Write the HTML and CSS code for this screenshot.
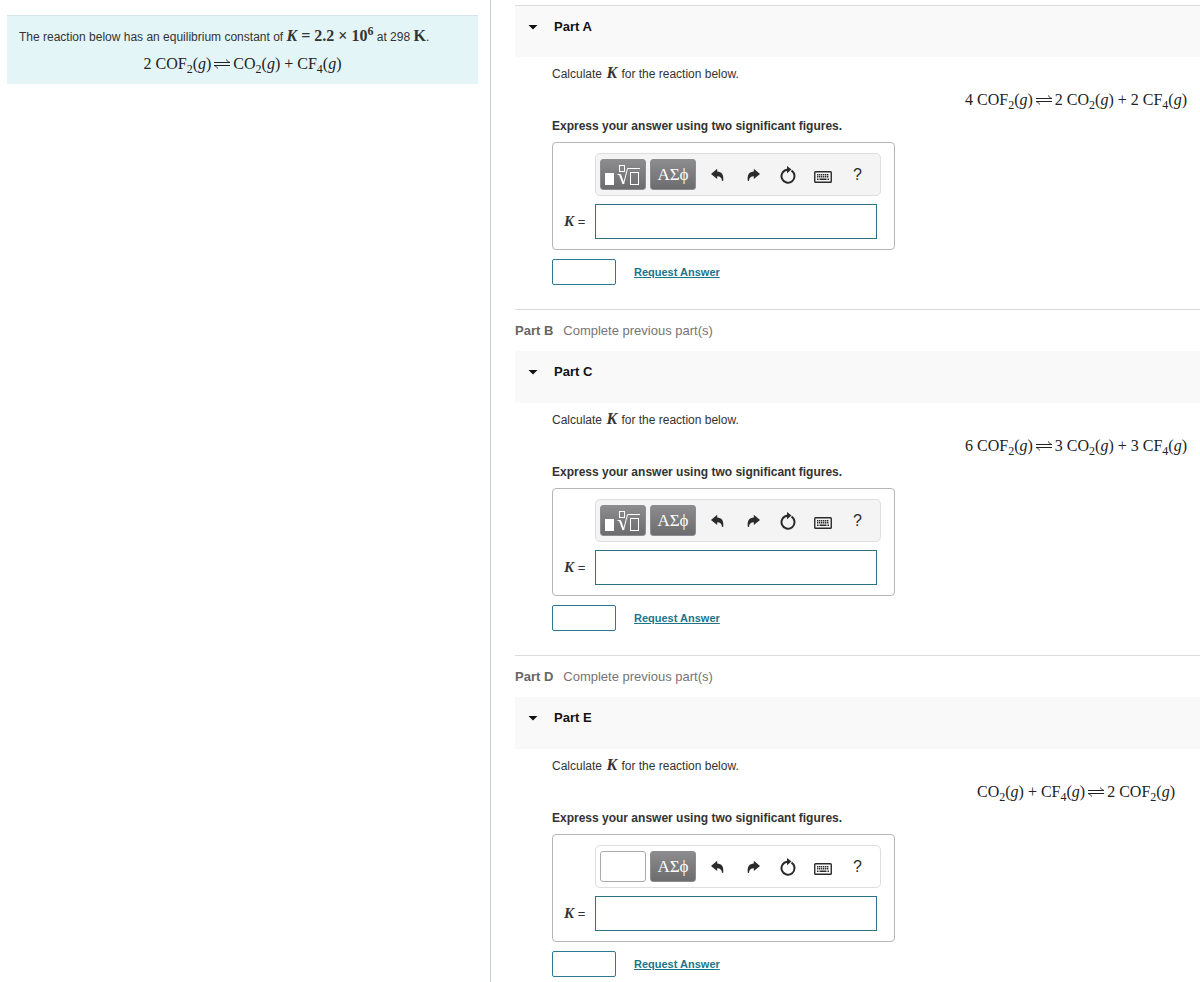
FILE: index.html
```html
<!DOCTYPE html>
<html lang="en">
<head>
<meta charset="utf-8">
<meta name="viewport" content="width=device-width, initial-scale=1">
<title>Equilibrium constant</title>
<link rel="stylesheet" href="styles.css">
</head>
<body>
<svg class="defs" aria-hidden="true">
  <symbol id="equil" viewBox="0 0 16 10"><path d="M0 3.500H16M16 3.500C14 3 13 2 12.500 .5M0 6.500H16M0 6.500C2 7 3 8 3.500 9.500" fill="none" stroke="currentColor" stroke-width="1"/></symbol>
  <symbol id="undo" viewBox="0 0 14 14"><path d="M0 6L6.200 .8V3.600C10.500 3.800 13 6.600 12.200 12.800L11 13C10.800 9.800 9.300 8.300 6.200 8.300V11Z" fill="currentColor"/></symbol>
  <symbol id="redo" viewBox="0 0 14 14"><path d="M14 6L7.800 .8V3.600C3.500 3.800 1 6.600 1.800 12.800L3 13C3.200 9.800 4.700 8.300 7.800 8.300V11Z" fill="currentColor"/></symbol>
  <symbol id="reset" viewBox="0 0 16 18"><path d="M11.500 4.700A6.500 6.500 0 1 1 7.500 3.700" fill="none" stroke="currentColor" stroke-width="2"/><path d="M7 0L11.500 3.500L7 7.200Z" fill="currentColor"/></symbol>
  <symbol id="keys" viewBox="0 0 18 12"><rect x=".75" y=".75" width="16.500" height="10.500" rx=".8" fill="none" stroke="currentColor" stroke-width="1.400"/><path d="M3 3.800H15M3 5.800H15" stroke="currentColor" stroke-width="1.500" stroke-dasharray="1.400 .6"/><path d="M3 8.200H4.500M5.500 8.200H12.500M13.500 8.200H15" stroke="currentColor" stroke-width="1.400"/></symbol>
  <symbol id="root" viewBox="0 0 36 22"><rect x="0" y="9" width="9" height="12" fill="#fff"/><g fill="none" stroke="#fff" stroke-width="1"><rect x="14.500" y="1.500" width="5" height="6"/><path d="M12.500 10.500H15L18.500 20L22.500 4.500H35"/><rect x="25.500" y="8.500" width="8" height="12"/></g><path d="M15 10.500L18.500 20" stroke="#fff" stroke-width="2"/></symbol>
</svg>
<div class="page">
  <aside class="side">
    <div class="intro">
      <p class="line">The reaction below has an equilibrium constant of <span class="math strong"><i>K</i> = 2.2 × 10<sup>6</sup></span> at 298 <span class="math strong">K</span>.</p>
      <p class="math formula">2 COF<sub>2</sub>(<i>g</i>)<svg class="equil" role="img" aria-label="is in equilibrium with"><use href="#equil"/></svg>CO<sub>2</sub>(<i>g</i>) + CF<sub>4</sub>(<i>g</i>)</p>
    </div>
  </aside>
  <main class="parts">
    <section class="part">
      <h2 class="head"><button class="toggle" type="button" aria-expanded="true"><span class="caret"></span>Part A</button></h2>
      <div class="body">
        <p class="line">Calculate <i class="math var">K</i> for the reaction below.</p>
        <p class="math formula aside">4 COF<sub>2</sub>(<i>g</i>)<svg class="equil" role="img" aria-label="is in equilibrium with"><use href="#equil"/></svg>2 CO<sub>2</sub>(<i>g</i>) + 2 CF<sub>4</sub>(<i>g</i>)</p>
        <p class="line hint">Express your answer using two significant figures.</p>
        <div class="answer">
          <div class="toolbar">
            <button class="pad" type="button" aria-label="Templates"><svg class="root"><use href="#root"/></svg></button>
            <button class="pad" type="button">ΑΣϕ</button>
            <div class="tools">
              <button class="tool" type="button" aria-label="Undo"><svg class="arrow"><use href="#undo"/></svg></button>
              <button class="tool" type="button" aria-label="Redo"><svg class="arrow"><use href="#redo"/></svg></button>
              <button class="tool" type="button" aria-label="Reset"><svg class="reset"><use href="#reset"/></svg></button>
              <button class="tool" type="button" aria-label="Keyboard shortcuts"><svg class="keys"><use href="#keys"/></svg></button>
              <button class="tool" type="button">?</button>
            </div>
          </div>
          <label class="label" for="answer-a"><i class="math">K</i> =</label>
          <input class="field" id="answer-a" type="text">
        </div>
        <div class="actions"><button class="submit" type="button" aria-label="Submit"></button><a class="request" href="#">Request Answer</a></div>
      </div>
    </section>
    <p class="locked"><b>Part B</b>Complete previous part(s)</p>
    <section class="part">
      <h2 class="head"><button class="toggle" type="button" aria-expanded="true"><span class="caret"></span>Part C</button></h2>
      <div class="body">
        <p class="line">Calculate <i class="math var">K</i> for the reaction below.</p>
        <p class="math formula aside">6 COF<sub>2</sub>(<i>g</i>)<svg class="equil" role="img" aria-label="is in equilibrium with"><use href="#equil"/></svg>3 CO<sub>2</sub>(<i>g</i>) + 3 CF<sub>4</sub>(<i>g</i>)</p>
        <p class="line hint">Express your answer using two significant figures.</p>
        <div class="answer">
          <div class="toolbar">
            <button class="pad" type="button" aria-label="Templates"><svg class="root"><use href="#root"/></svg></button>
            <button class="pad" type="button">ΑΣϕ</button>
            <div class="tools">
              <button class="tool" type="button" aria-label="Undo"><svg class="arrow"><use href="#undo"/></svg></button>
              <button class="tool" type="button" aria-label="Redo"><svg class="arrow"><use href="#redo"/></svg></button>
              <button class="tool" type="button" aria-label="Reset"><svg class="reset"><use href="#reset"/></svg></button>
              <button class="tool" type="button" aria-label="Keyboard shortcuts"><svg class="keys"><use href="#keys"/></svg></button>
              <button class="tool" type="button">?</button>
            </div>
          </div>
          <label class="label" for="answer-c"><i class="math">K</i> =</label>
          <input class="field" id="answer-c" type="text">
        </div>
        <div class="actions"><button class="submit" type="button" aria-label="Submit"></button><a class="request" href="#">Request Answer</a></div>
      </div>
    </section>
    <p class="locked"><b>Part D</b>Complete previous part(s)</p>
    <section class="part">
      <h2 class="head"><button class="toggle" type="button" aria-expanded="true"><span class="caret"></span>Part E</button></h2>
      <div class="body">
        <p class="line">Calculate <i class="math var">K</i> for the reaction below.</p>
        <p class="math formula aside">CO<sub>2</sub>(<i>g</i>) + CF<sub>4</sub>(<i>g</i>)<svg class="equil" role="img" aria-label="is in equilibrium with"><use href="#equil"/></svg>2 COF<sub>2</sub>(<i>g</i>)</p>
        <p class="line hint">Express your answer using two significant figures.</p>
        <div class="answer">
          <div class="toolbar plain">
            <button class="pad blank" type="button" aria-label="Templates"></button>
            <button class="pad" type="button">ΑΣϕ</button>
            <div class="tools">
              <button class="tool" type="button" aria-label="Undo"><svg class="arrow"><use href="#undo"/></svg></button>
              <button class="tool" type="button" aria-label="Redo"><svg class="arrow"><use href="#redo"/></svg></button>
              <button class="tool" type="button" aria-label="Reset"><svg class="reset"><use href="#reset"/></svg></button>
              <button class="tool" type="button" aria-label="Keyboard shortcuts"><svg class="keys"><use href="#keys"/></svg></button>
              <button class="tool" type="button">?</button>
            </div>
          </div>
          <label class="label" for="answer-e"><i class="math">K</i> =</label>
          <input class="field" id="answer-e" type="text">
        </div>
        <div class="actions"><button class="submit" type="button" aria-label="Submit"></button><a class="request" href="#">Request Answer</a></div>
      </div>
    </section>
  </main>
</div>
</body>
</html>
```

FILE: styles.css
```css
* { box-sizing: border-box; }
body { margin: 0; background: #fff; color: #333; font: 12px/16px "Liberation Sans", Arial, sans-serif; }
p, h2 { margin: 0; }
button { font: inherit; color: inherit; padding: 0; border: 0; background: none; }
.defs { display: none; }

.page { display: grid; grid-template-columns: 491px minmax(0, 1fr); min-height: 100vh; }
.side { padding: 15px 12px 0 7px; border-right: 1px solid #c3d0d6; }
.intro { padding: 13px 12px 10px; background: #e4f5f7; border-top: 1px solid #d5e6ea; }
.intro .formula { margin-top: 9px; }

.line { height: 16px; line-height: 14px; white-space: nowrap; }
.math { font-family: "Liberation Serif", "Times New Roman", serif; }
.strong { font-size: 16px; font-weight: bold; }
.var { font-size: 16px; font-weight: bold; margin: 0 1px; }
.formula { height: 20px; font-size: 16px; line-height: 20px; color: #222; text-align: center; white-space: nowrap; -webkit-text-stroke: 0; }
sub, sup { font-size: 12px; line-height: 0; }
.equil { width: 16px; height: 10px; margin: 0 3px; }

.parts { padding: 5px 0 0 24px; }
.head { height: 52px; padding: 13px 13px; background: #f9f9f9; font-size: 13px; }
.part:first-child .head { border-top: 1px solid #dcdcdc; }
.toggle { display: flex; align-items: center; gap: 16px; color: #111; font-weight: bold; }
.caret { width: 10px; height: 5px; background: #111; clip-path: polygon(0 0, 100% 0, 50% 100%); }

.body { padding: 9px 0 24px 37px; }
.part:not(:last-child) { border-bottom: 1px solid #dcdcdc; }
.part:last-child .body { padding-bottom: 0; }
.aside { width: 248px; margin: 8px 0 9px auto; }
.hint { font-size: 12px; font-weight: bold; }

.answer { display: grid; grid-template-columns: 31px 282px; row-gap: 8px; width: 343px; height: 108px; margin-top: 7px; padding: 10px 0 0 11px; border: 1px solid #b5b5b5; border-radius: 4px; align-content: start; }
.toolbar { grid-column: 2; display: flex; align-items: center; gap: 4px; width: 286px; height: 43px; padding: 0 4px; background: #f4f4f4; border: 1px solid #dedede; border-radius: 5px; }
.plain { background: #fff; }
.pad { display: grid; place-items: center; width: 46px; height: 31px; border: 1px solid #8d8d8f; border-radius: 3px; background: linear-gradient(#8c8c8f, #6c6c6f); color: #fff; font: 17px/20px "Liberation Serif", serif; }
.blank { background: #fff; border-color: #aaa; }
.root { width: 36px; height: 22px; }
.tools { display: flex; color: #2b2b2b; }
.tool { display: grid; place-items: center; width: 35px; height: 31px; font-size: 16px; }
.arrow { width: 14px; height: 14px; }
.reset { width: 16px; height: 18px; }
.keys { width: 18px; height: 12px; margin-top: 4px; }
.label { align-self: center; font-size: 13px; white-space: nowrap; }
.label .math { font-size: 15px; font-weight: bold; }
.field { height: 35px; padding: 0 8px; border: 1px solid #2b7283; background: #fff; font-size: 16px; }

.actions { display: flex; align-items: center; gap: 18px; margin-top: 9px; }
.submit { width: 64px; height: 26px; border: 1px solid #2b7a90; border-radius: 2px; background: #fff; }
.request { color: #1c758a; font-size: 11px; font-weight: bold; }
.locked { display: flex; align-items: center; gap: 10px; height: 41px; color: #757575; font-size: 13px; }
.locked b { color: #666; }
```
